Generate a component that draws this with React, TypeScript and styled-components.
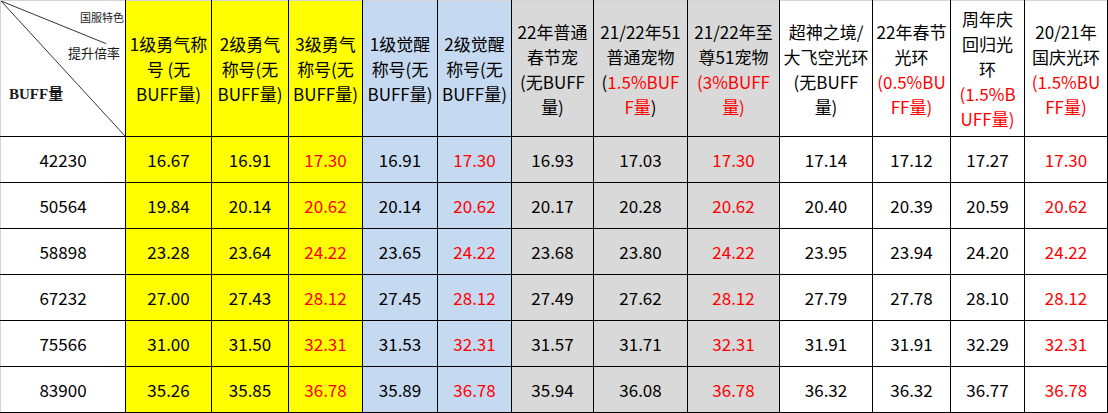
import React from 'react';
import styled, { createGlobalStyle } from 'styled-components';

const GlobalStyle = createGlobalStyle`
    html, body {
        margin: 0;
        padding: 0;
        background: #ffffff;
    }
    body {
        font-family: 'Microsoft YaHei', 'Noto Sans CJK SC', sans-serif;
        color: #000000;
    }
`;

const fills: Record<string, string> = {
    yellow: '#ffff00',
    blue: '#c5d9f1',
    gray: '#d9d9d9',
    white: '#ffffff',
};

type Column = {
    width: number;
    fill: keyof typeof fills;
    red: boolean;
    lines: string[];
};

// text between [ ] is red
const columns: Column[] = [
    { width: 86, fill: 'yellow', red: false, lines: ['1级勇气称', '号 (无', 'BUFF量)'] },
    { width: 77, fill: 'yellow', red: false, lines: ['2级勇气', '称号(无', 'BUFF量)'] },
    { width: 74, fill: 'yellow', red: true, lines: ['3级勇气', '称号(无', 'BUFF量)'] },
    { width: 75, fill: 'blue', red: false, lines: ['1级觉醒', '称号(无', 'BUFF量)'] },
    { width: 74, fill: 'blue', red: true, lines: ['2级觉醒', '称号(无', 'BUFF量)'] },
    { width: 82, fill: 'gray', red: false, lines: ['22年普通', '春节宠', '(无BUFF', '量)'] },
    { width: 94, fill: 'gray', red: false, lines: ['21/22年51', '普通宠物', '([1.5%BUF]', '[F量])'] },
    { width: 92, fill: 'gray', red: true, lines: ['21/22年至', '尊51宠物', '[(3%BUFF]', '[量)]'] },
    { width: 93, fill: 'white', red: false, lines: ['超神之境/', '大飞空光环', '(无BUFF', '量)'] },
    { width: 78, fill: 'white', red: false, lines: ['22年春节', '光环', '[(0.5%BU]', '[FF量)]'] },
    { width: 74, fill: 'white', red: false, lines: ['周年庆', '回归光', '环', '[(1.5%B]', '[UFF量)]'] },
    { width: 83, fill: 'white', red: true, lines: ['20/21年', '国庆光环', '[(1.5%BU]', '[FF量)]'] },
];

const rows: { buff: string; values: string[] }[] = [
    { buff: '42230', values: ['16.67', '16.91', '17.30', '16.91', '17.30', '16.93', '17.03', '17.30', '17.14', '17.12', '17.27', '17.30'] },
    { buff: '50564', values: ['19.84', '20.14', '20.62', '20.14', '20.62', '20.17', '20.28', '20.62', '20.40', '20.39', '20.59', '20.62'] },
    { buff: '58898', values: ['23.28', '23.64', '24.22', '23.65', '24.22', '23.68', '23.80', '24.22', '23.95', '23.94', '24.20', '24.22'] },
    { buff: '67232', values: ['27.00', '27.43', '28.12', '27.45', '28.12', '27.49', '27.62', '28.12', '27.79', '27.78', '28.10', '28.12'] },
    { buff: '75566', values: ['31.00', '31.50', '32.31', '31.53', '32.31', '31.57', '31.71', '32.31', '31.91', '31.91', '32.29', '32.31'] },
    { buff: '83900', values: ['35.26', '35.85', '36.78', '35.89', '36.78', '35.94', '36.08', '36.78', '36.32', '36.32', '36.77', '36.78'] },
];

const gridLine = '#d4d4d4';

const Sheet = styled.table`
    border-collapse: collapse;
    table-layout: fixed;
    width: 1108px;
    font-size: 17px;
`;

const HeaderRow = styled.tr`
    height: 136px;
`;

const BodyRow = styled.tr`
    height: 46px;
`;

const CornerCell = styled.th`
    position: relative;
    padding: 0;
    border: 1px solid #000000;
    border-top-color: ${gridLine};
    border-left-color: ${gridLine};
    background: #ffffff;
    font-weight: normal;
`;

const Diagonals = styled.svg`
    position: absolute;
    inset: 0;
    width: 100%;
    height: 100%;
`;

const CornerLabel = styled.span<{ $top: number; $left: number; $size: number; $serif?: boolean }>`
    position: absolute;
    top: ${(p) => p.$top}px;
    left: ${(p) => p.$left}px;
    font-size: ${(p) => p.$size}px;
    line-height: 1;
    white-space: nowrap;
    color: #1a1a1a;
    font-family: ${(p) =>
        p.$serif
            ? "'Liberation Serif', 'Noto Sans CJK SC', serif"
            : "'Microsoft YaHei', 'Noto Sans CJK SC', sans-serif"};
    font-weight: ${(p) => (p.$serif ? 700 : 400)};
`;

const HeaderCell = styled.th<{ $fill: string; $red: boolean }>`
    padding: 0;
    border: 1px solid #000000;
    border-top-color: ${gridLine};
    background: ${(p) => p.$fill};
    color: ${(p) => (p.$red ? '#ff0000' : '#000000')};
    font-weight: normal;
    text-align: center;
    vertical-align: middle;
    line-height: 25px;
`;

const HeaderLine = styled.div`
    white-space: nowrap;
`;

const Red = styled.span`
    color: #ff0000;
`;

const BuffCell = styled.td`
    padding: 0;
    border: 1px solid #000000;
    border-left-color: ${gridLine};
    background: #ffffff;
    text-align: center;
    vertical-align: middle;
`;

const ValueCell = styled.td<{ $fill: string; $red: boolean }>`
    padding: 0;
    border: 1px solid #000000;
    background: ${(p) => p.$fill};
    color: ${(p) => (p.$red ? '#ff0000' : '#000000')};
    text-align: center;
    vertical-align: middle;
`;

function renderLine(line: string) {
    return line
        .split(/(\[[^\]]*\])/)
        .filter(Boolean)
        .map((part, i) =>
            part.startsWith('[') ? <Red key={i}>{part.slice(1, -1)}</Red> : <span key={i}>{part}</span>
        );
}

export default function App() {
    return (
        <>
            <GlobalStyle />
            <Sheet>
                <colgroup>
                    <col style={{ width: 125 }} />
                    {columns.map((c, i) => (
                        <col key={i} style={{ width: c.width }} />
                    ))}
                </colgroup>
                <thead>
                    <HeaderRow>
                        <CornerCell>
                            <Diagonals viewBox="0 0 125 136" preserveAspectRatio="none">
                                <line x1="0" y1="0" x2="125" y2="136" stroke="#333" strokeWidth="1" />
                                <line x1="0" y1="0" x2="106" y2="43" stroke="#333" strokeWidth="1" />
                            </Diagonals>
                            <CornerLabel $top={11} $left={79} $size={11}>
                                国服特色
                            </CornerLabel>
                            <CornerLabel $top={45} $left={67} $size={13}>
                                提升倍率
                            </CornerLabel>
                            <CornerLabel $top={86} $left={8} $size={15} $serif>
                                BUFF量
                            </CornerLabel>
                        </CornerCell>
                        {columns.map((c, i) => (
                            <HeaderCell key={i} $fill={fills[c.fill]} $red={false}>
                                {c.lines.map((l, j) => (
                                    <HeaderLine key={j}>{renderLine(l)}</HeaderLine>
                                ))}
                            </HeaderCell>
                        ))}
                    </HeaderRow>
                </thead>
                <tbody>
                    {rows.map((r) => (
                        <BodyRow key={r.buff}>
                            <BuffCell>{r.buff}</BuffCell>
                            {r.values.map((v, i) => (
                                <ValueCell key={i} $fill={fills[columns[i].fill]} $red={columns[i].red}>
                                    {v}
                                </ValueCell>
                            ))}
                        </BodyRow>
                    ))}
                </tbody>
            </Sheet>
        </>
    );
}
